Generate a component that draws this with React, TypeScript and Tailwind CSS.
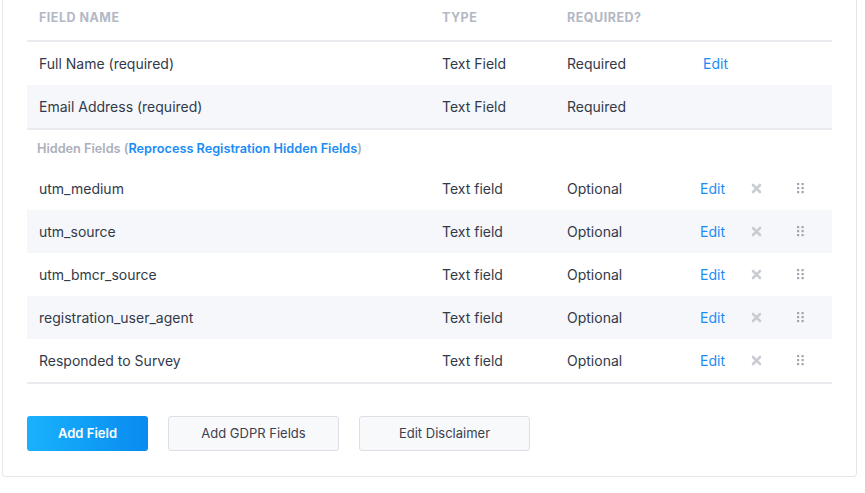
import React from 'react'

type Field = { name: string; type: string; required: string; removable: boolean }

const mainFields: Field[] = [
  { name: 'Full Name (required)', type: 'Text Field', required: 'Required', removable: false },
  { name: 'Email Address (required)', type: 'Text Field', required: 'Required', removable: false },
]

const hiddenFields: Field[] = [
  { name: 'utm_medium', type: 'Text field', required: 'Optional', removable: true },
  { name: 'utm_source', type: 'Text field', required: 'Optional', removable: true },
  { name: 'utm_bmcr_source', type: 'Text field', required: 'Optional', removable: true },
  { name: 'registration_user_agent', type: 'Text field', required: 'Optional', removable: true },
  { name: 'Responded to Survey', type: 'Text field', required: 'Optional', removable: true },
]

const cols = 'grid grid-cols-[403px_125px_133px_56px_44px_45px] items-center'

function CloseIcon() {
  return (
    <svg width="11" height="11" viewBox="0 0 11 11">
      <path d="M2 2L9 9M9 2L2 9" stroke="#c9ccd2" strokeWidth="2.6" strokeLinecap="round" />
    </svg>
  )
}

function DragIcon() {
  return (
    <svg width="7" height="11" viewBox="0 0 7 11">
      {[0, 1, 2].map(r =>
        [0, 1].map(c => (
          <rect key={`${r}-${c}`} x={c * 4.5} y={r * 4} width="2.2" height="2.2" fill="#a1a6b0" />
        ))
      )}
    </svg>
  )
}

function Row({ field, index, first }: { field: Field; index: number; first?: boolean }) {
  return (
    <div className={`${cols} h-[43px] ${index % 2 === 1 ? 'bg-[#f6f7fa]' : 'bg-white'}`}>
      <div className="pl-3">{field.name}</div>
      <div className="pl-3">{field.type}</div>
      <div className="pl-3">{field.required}</div>
      <div className={first ? 'pl-[15px]' : 'pl-3'}>
        {(field.removable || index === 0) && (
          <a href="#" className="text-[#1b8cf5]">Edit</a>
        )}
      </div>
      <div className="pl-[7px] flex items-center">{field.removable && <CloseIcon />}</div>
      <div className="pl-[9px] flex items-center">{field.removable && <DragIcon />}</div>
    </div>
  )
}

export default function App() {
  return (
    <div className="min-h-screen bg-white pl-[2px] pr-[8px] text-[14px] text-[#323a4a]" style={{ fontFamily: 'Inter, "Noto Sans", sans-serif' }}>
      <div className="border-x border-b border-[#e5e7eb] rounded-b px-6 pb-[25px]">
        {/* Header */}
        <div className={`${cols} h-[42px] border-b-2 border-[#e9ebef] text-[12.5px] font-bold uppercase tracking-[0.04em] text-[#b3b8c5]`}>
          <div className="pl-3 -mt-[3px]">Field Name</div>
          <div className="pl-3 -mt-[3px]">Type</div>
          <div className="pl-3 -mt-[3px]">Required?</div>
          <div />
          <div />
          <div />
        </div>

        {mainFields.map((f, i) => (
          <Row key={f.name} field={f} index={i} first />
        ))}

        <div className="border-t-2 border-[#e9ebef] h-[39px] flex items-center pl-[10px] text-[12.7px] font-semibold text-[#abb0bc]">
          Hidden Fields (
          <a href="#" className="text-[#1b8cf5]">Reprocess Registration Hidden Fields</a>
          )
        </div>

        {hiddenFields.map((f, i) => (
          <Row key={f.name} field={f} index={i} />
        ))}

        <div className="border-t-2 border-[#e9ebef]" />

        {/* Actions */}
        <div className="flex gap-5 mt-8">
          <button className="w-[121px] h-[35px] rounded-[3px] bg-gradient-to-r from-[#1ab2fc] to-[#0a8bf0] text-white text-[13px] font-semibold">
            Add Field
          </button>
          <button className="w-[171px] h-[35px] rounded-[3px] border border-[#dcdfe4] bg-[#f8f9fb] text-[13px] text-[#3a4150]">
            Add GDPR Fields
          </button>
          <button className="w-[171px] h-[35px] rounded-[3px] border border-[#dcdfe4] bg-[#f8f9fb] text-[13px] text-[#3a4150]">
            Edit Disclaimer
          </button>
        </div>
      </div>
    </div>
  )
}
